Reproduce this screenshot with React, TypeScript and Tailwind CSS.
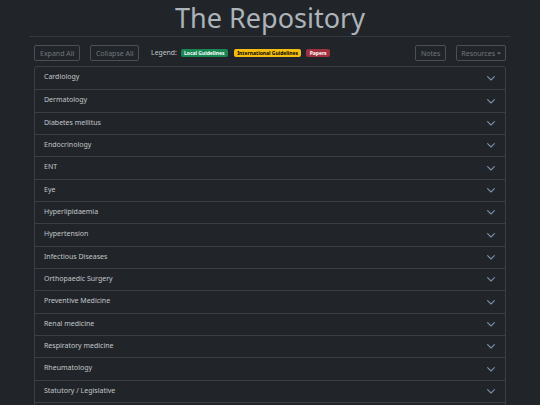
import React from 'react';

const topics = [
  'Cardiology',
  'Dermatology',
  'Diabetes mellitus',
  'Endocrinology',
  'ENT',
  'Eye',
  'Hyperlipidaemia',
  'Hypertension',
  'Infectious Diseases',
  'Orthopaedic Surgery',
  'Preventive Medicine',
  'Renal medicine',
  'Respiratory medicine',
  'Rheumatology',
  'Statutory / Legislative',
  'Urology',
];

const Chevron = () => (
  <svg width="8" height="5" viewBox="0 0 8 5" fill="none" className="shrink-0">
    <path d="M0.6 0.7 L4 4 L7.4 0.7" stroke="#7c8fa9" strokeWidth="1.1" strokeLinecap="round" strokeLinejoin="round" />
  </svg>
);

const OutlineButton: React.FC<{ children: React.ReactNode; className?: string }> = ({ children, className }) => (
  <button
    type="button"
    className={`h-[16px] flex items-center border border-[#4a5056] rounded-[2px] text-[7px] text-[#6f767d] leading-none ${className ?? 'px-[5px]'}`}
  >
    {children}
  </button>
);

export default function App() {
  return (
    <div className="min-h-[405px] bg-[#212529] overflow-hidden" style={{ fontFamily: '"Noto Sans", "Open Sans", sans-serif' }}>
      <div className="ml-[29px] mr-[30px]">
        <h1 className="text-center text-[27px] leading-[36px] text-[#adb3ba] pl-[1px]">The Repository</h1>

        <div className="border-t border-[#343940]" />

        <div className="pl-[5px] pr-[4px]">
          <div className="flex items-center mt-[8px] h-[16px]">
            <OutlineButton>Expand All</OutlineButton>
            <OutlineButton className="ml-[10px] px-[4.5px]">Collapse All</OutlineButton>
            <span className="ml-[12px] text-[6.8px] text-[#c3c7cb]">Legend:</span>
            <span className="ml-[4px] h-[8px] flex items-center px-[3.3px] rounded-[2px] bg-[#198754] text-white text-[5px] font-bold leading-none">
              Local Guidelines
            </span>
            <span className="ml-[6px] h-[8px] flex items-center px-[3.3px] rounded-[2px] bg-[#f5bd0f] text-black text-[5px] font-bold leading-none">
              International Guidelines
            </span>
            <span className="ml-[5px] h-[8px] flex items-center px-[3.3px] rounded-[2px] bg-[#a0303d] text-white text-[5px] font-bold leading-none">
              Papers
            </span>
            <div className="ml-auto flex items-center">
              <OutlineButton className="px-[5px]">Notes</OutlineButton>
              <OutlineButton className="ml-[10px] gap-[2px] px-[4px]">
                Resources
                <svg width="4" height="3" viewBox="0 0 4 3">
                  <path d="M0 0.5 L4 0.5 L2 2.6 Z" fill="#6f767d" />
                </svg>
              </OutlineButton>
            </div>
          </div>

          <div className="mt-[5px] border border-[#3a3f45] rounded-t-[3px]">
            {topics.map((t, i) => (
              <div
                key={t}
                className={`h-[22.35px] flex items-center justify-between pl-[9px] pr-[10px] ${i > 0 ? 'border-t border-[#3a3f45]' : ''}`}
              >
                <span className="text-[7px] text-[#c2c6ca] -mt-[1px]">{t}</span>
                <Chevron />
              </div>
            ))}
          </div>
        </div>
      </div>
    </div>
  );
}
